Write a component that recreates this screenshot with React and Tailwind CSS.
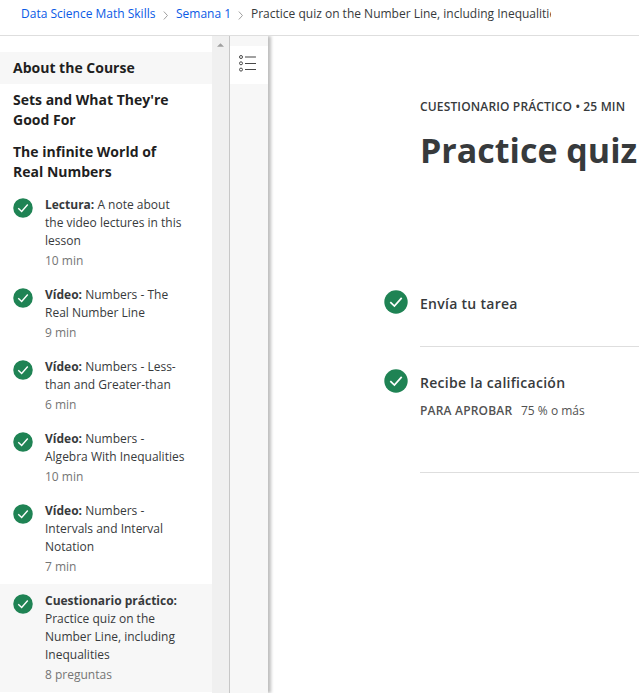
import React from 'react';

const items = [
  { kind: 'Lectura:', lines: ['A note about', 'the video lectures in this', 'lesson'], meta: '10 min' },
  { kind: 'Vídeo:', lines: ['Numbers - The', 'Real Number Line'], meta: '9 min' },
  { kind: 'Vídeo:', lines: ['Numbers - Less-', 'than and Greater-than'], meta: '6 min' },
  { kind: 'Vídeo:', lines: ['Numbers -', 'Algebra With Inequalities'], meta: '10 min' },
  { kind: 'Vídeo:', lines: ['Numbers -', 'Intervals and Interval', 'Notation'], meta: '7 min' },
  { kind: 'Cuestionario práctico:', lines: ['', 'Practice quiz on the', 'Number Line, including', 'Inequalities'], meta: '8 preguntas', active: true },
];

function Check({ className }) {
  return (
    <svg viewBox="0 0 24 24" className={className}>
      <circle cx="12" cy="12" r="11.7" fill="#1f8354" />
      <path d="M6.3 12.2l4.1 3.9 7.3-8.2" fill="none" stroke="#fff" strokeWidth="1.7" />
    </svg>
  );
}

function Chevron() {
  return (
    <svg viewBox="0 0 6 10" className="mt-[2px] h-[9px] w-[6px] shrink-0">
      <path d="M0.6 0.6l4 4.4-4 4.4" fill="none" stroke="#8a8a8a" strokeWidth="0.9" />
    </svg>
  );
}

function Section({ children, active }) {
  return (
    <h2 className={`px-[13px] py-[6px] text-[14px] font-bold leading-[20px] text-[#1f1f1f] ${active ? 'bg-[#f7f7f7]' : ''}`}>
      {children}
    </h2>
  );
}

function Item({ item }) {
  return (
    <li className={`flex py-2 pl-[13px] ${item.active ? 'bg-[#f7f7f7]' : ''}`}>
      <Check className="mt-[2px] h-5 w-5 shrink-0" />
      <div className="ml-3 whitespace-nowrap text-[12px] leading-[18px] text-[#373a3c]">
        {item.lines.map((line, i) => (
          <p key={i}>
            {i === 0 && <strong className="font-bold">{item.kind} </strong>}
            {line}
          </p>
        ))}
        <p className="mt-[2px] text-[#757575]">{item.meta}</p>
      </div>
    </li>
  );
}

export default function App() {
  return (
    <div className="flex h-[693px] w-[639px] flex-col overflow-hidden bg-white font-['Open_Sans',sans-serif] text-[#373a3c]">
      <nav className="flex h-9 shrink-0 items-center whitespace-nowrap border-b border-[#dedede] pb-[7px] pl-[21px] text-[12px] leading-[18px]">
        <a className="w-[134px] text-[#0a5ae6]">Data Science Math Skills</a>
        <span className="flex w-[21px] pl-[8px]"><Chevron /></span>
        <a className="w-[54px] text-[#0a5ae6]">Semana 1</a>
        <span className="flex w-[21px] pl-[8px]"><Chevron /></span>
        <span className="w-[300px] overflow-hidden">Practice quiz on the Number Line, including Inequalities</span>
      </nav>
      <div className="flex min-h-0 flex-1 overflow-hidden">
        <aside className="w-[212px] shrink-0 pt-4">
          <Section active>About the Course</Section>
          <Section>Sets and What They're<br />Good For</Section>
          <Section>The infinite World of<br />Real Numbers</Section>
          <ul>
            {items.map((item, i) => <Item key={i} item={item} />)}
          </ul>
        </aside>
        <div className="w-[17px] shrink-0 bg-[#f0f0f0] pl-[5px] pt-[7px]">
          <svg viewBox="0 0 8 4" className="h-[4px] w-[7px]"><path d="M0 4l4-4 4 4z" fill="#a0a0a0" /></svg>
        </div>
        <div className="w-[39px] shrink-0 border-l border-[#c7c7c7] bg-[#f7f7f7] pt-[10px] shadow-[3px_0_3px_rgba(0,0,0,0.25)]">
          <div className="h-[38px] bg-white pl-[9px] pt-[9px]">
            <svg viewBox="0 0 18 17" className="h-[17px] w-[18px]" fill="none" stroke="#484848">
              <circle cx="2" cy="2" r="1.5" />
              <circle cx="2" cy="8.3" r="1.5" />
              <circle cx="2" cy="14.6" r="1.5" />
              <path d="M6 2h11" strokeWidth="1.6" stroke="#888" />
              <path d="M6 8.5h11M6 14.5h11" />
            </svg>
          </div>
        </div>
        <main className="min-w-0 flex-1 whitespace-nowrap pl-[116px] pt-[62px]">
          <div className="pl-9">
            <p className="text-[12px] font-semibold leading-[18px] tracking-[0.15px]">CUESTIONARIO PRÁCTICO • 25 MIN</p>
            <h1 className="mt-[10px] text-[34px] font-bold leading-[48px]">Practice quiz</h1>
          </div>
          <section className="mt-[116px] flex">
            <Check className="h-6 w-6 shrink-0" />
            <div className="ml-3 h-[57px] flex-1 border-b border-[#dedede] pt-[4px]">
              <h3 className="text-[14px] font-semibold leading-[20px] tracking-[0.28px]">Envía tu tarea</h3>
            </div>
          </section>
          <section className="mt-[22px] flex">
            <Check className="h-6 w-6 shrink-0" />
            <div className="ml-3 h-[104px] flex-1 border-b border-[#dedede] pt-[4px]">
              <h3 className="text-[14px] font-semibold leading-[20px] tracking-[0.28px]">Recibe la calificación</h3>
              <p className="mt-[9px] flex text-[12px] leading-[18px] text-[#525252]">
                <span className="w-[101px] font-semibold tracking-[0.2px]">PARA APROBAR</span>
                <span>75 % o más</span>
              </p>
            </div>
          </section>
        </main>
      </div>
    </div>
  );
}
